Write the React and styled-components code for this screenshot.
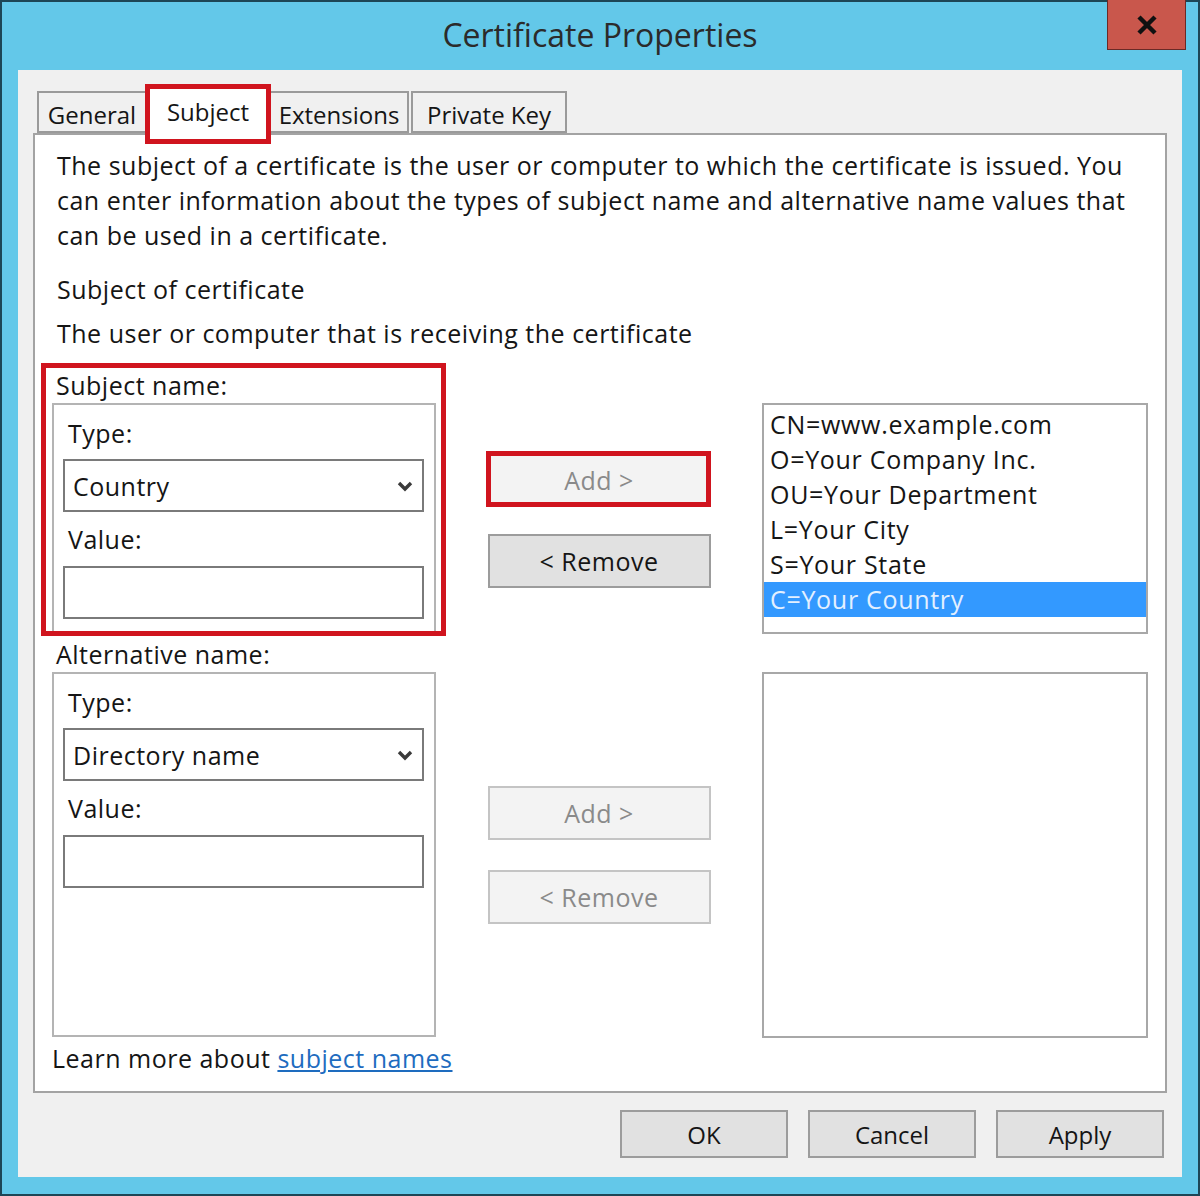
import React from "react";
import styled, { createGlobalStyle } from "styled-components";

const Global = createGlobalStyle`
  html, body { margin: 0; padding: 0; background: #1d4656; }
  body { font-family: "Open Sans", "Noto Sans", sans-serif; }
  * { box-sizing: border-box; }
`;

const Window = styled.div`
  width: 1200px;
  height: 1196px;
  background: #63c8e9;
  border: 2px solid #1d4656;
  display: flex;
  flex-direction: column;
`;

const TitleBar = styled.div`
  height: 70px;
  display: grid;
  grid-template-columns: 1fr auto 1fr;
  align-items: start;
`;

const Title = styled.div`
  grid-column: 2;
  font-size: 32px;
  color: #2b2b2b;
  line-height: 70px;
  margin-top: -2px;
`;

const CloseButton = styled.div`
  grid-column: 3;
  justify-self: end;
  margin-right: 12px;
  margin-top: -2px;
  width: 79px;
  height: 50px;
  background: #c9574c;
  border: 1px solid #6b2a26;
  border-top: none;
  display: flex;
  align-items: center;
  justify-content: center;
`;

const Client = styled.div`
  flex: 1;
  margin: 0 16px 17px;
  background: #f0f0f0;
  padding: 16px 15px 19px;
  display: flex;
  flex-direction: column;
  color: #151515;
  font-size: 25px;
  letter-spacing: 0.5px;
`;

const TabStrip = styled.div`
  display: flex;
  align-items: flex-end;
  padding-left: 4px;
  height: 47px;
`;

const Tab = styled.div`
  position: relative;
  width: ${(p) => p.$w}px;
  margin-right: ${(p) => p.$gap || 0}px;
  height: ${(p) => (p.$active ? 49 : 42)}px;
  margin-bottom: ${(p) => (p.$active ? -2 : 0)}px;
  padding-top: ${(p) => (p.$active ? 0 : 4)}px;
  background: ${(p) => (p.$active ? "#ffffff" : "#f0f0f0")};
  border: 2px solid #9a9a9a;
  border-bottom: ${(p) => (p.$active ? "none" : "2px solid #9a9a9a")};
  z-index: ${(p) => (p.$active ? 2 : 1)};
  display: flex;
  align-items: center;
  justify-content: center;
  font-size: 24px;
  letter-spacing: 0px;
  white-space: nowrap;
`;

const Highlight = styled.span`
  position: absolute;
  left: ${(p) => p.$l}px;
  right: ${(p) => p.$r}px;
  top: ${(p) => p.$t}px;
  bottom: ${(p) => p.$b}px;
  border: 5px solid #d0141e;
  pointer-events: none;
  z-index: 5;
`;

const Panel = styled.div`
  background: #ffffff;
  border: 2px solid #a3a3a3;
  padding: 13px 17px 15px;
  display: flex;
  flex-direction: column;
`;

const Para = styled.p`
  margin: ${(p) => p.$mt || 0}px 0 0 5px;
  line-height: 35px;
  white-space: nowrap;
`;

const Section = styled.div`
  margin-top: ${(p) => p.$mt}px;
  display: grid;
  grid-template-columns: 384px 223px 386px;
  justify-content: space-between;
`;

const LeftCol = styled.div`
  position: relative;
  display: flex;
  flex-direction: column;
`;

const GroupLabel = styled.div`
  line-height: 35px;
  padding-left: 4px;
`;

const GroupBox = styled.div`
  height: ${(p) => p.$h}px;
  border: 2px solid #b4b4b4;
  padding: 11px 10px 0 9px;
  display: flex;
  flex-direction: column;
`;

const FieldLabel = styled.div`
  line-height: 35px;
  padding-left: 5px;
  margin-top: ${(p) => p.$mt || 0}px;
`;

const SelectBox = styled.div`
  height: 53px;
  margin-top: 8px;
  border: 2px solid #7a7a7a;
  background: #ffffff;
  display: flex;
  align-items: center;
  justify-content: space-between;
  padding: 0 8px 0 8px;
`;

const TextInput = styled.div`
  height: 53px;
  margin-top: 9px;
  border: 2px solid #7a7a7a;
  background: #ffffff;
`;

const MidCol = styled.div`
  display: flex;
  flex-direction: column;
  padding-top: ${(p) => p.$pt}px;
`;

const ButtonWrap = styled.div`
  position: relative;
  margin-top: ${(p) => p.$mt || 0}px;
`;

const Button = styled.div`
  height: ${(p) => p.$h || 54}px;
  width: ${(p) => (p.$w ? `${p.$w}px` : "100%")};
  border: 2px solid ${(p) => (p.$disabled ? "#c4c4c4" : "#9c9c9c")};
  background: ${(p) => (p.$disabled ? "#f3f3f3" : "#e1e1e1")};
  color: ${(p) => (p.$disabled ? "#8a8a8a" : "#151515")};
  display: flex;
  align-items: center;
  justify-content: center;
  font-size: ${(p) => p.$fs || 25}px;
  letter-spacing: ${(p) => (p.$fs ? 0 : 0.5)}px;
  white-space: nowrap;
`;

const RightCol = styled.div`
  padding-top: 35px;
`;

const ListBox = styled.div`
  height: ${(p) => p.$h}px;
  border: 2px solid #a8a8a8;
  background: #ffffff;
  padding-top: 2px;
`;

const ListItem = styled.div`
  line-height: 35px;
  height: 35px;
  padding-left: 6px;
  background: ${(p) => (p.$selected ? "#3399ff" : "transparent")};
  color: ${(p) => (p.$selected ? "#e3f0ff" : "#151515")};
  letter-spacing: 0.7px;
  white-space: nowrap;
`;

const LearnMore = styled.div`
  margin-top: 3px;
  line-height: 35px;
`;

const Link = styled.a`
  color: #1e6cbf;
  text-decoration: underline;
`;

const ButtonRow = styled.div`
  margin-top: 17px;
  display: flex;
  justify-content: flex-end;
  gap: 20px;
  padding-right: 3px;
`;

const Chevron = () => (
  <svg width="18" height="12" viewBox="0 0 18 12">
    <polyline
      points="3,3 9,9 15,3"
      fill="none"
      stroke="#3a3a3a"
      strokeWidth="3.4"
    />
  </svg>
);

const CloseX = () => (
  <svg width="22" height="20" viewBox="0 0 22 20">
    <path d="M3 2 L19 18 M19 2 L3 18" stroke="#111" strokeWidth="4.5" strokeLinecap="butt" />
  </svg>
);

const items = [
  "CN=www.example.com",
  "O=Your Company Inc.",
  "OU=Your Department",
  "L=Your City",
  "S=Your State",
  "C=Your Country",
];

export default function App() {
  return (
    <>
      <Global />
      <Window>
        <TitleBar>
          <Title>Certificate Properties</Title>
          <CloseButton>
            <CloseX />
          </CloseButton>
        </TitleBar>
        <Client>
          <TabStrip>
            <Tab $w={110} $gap={1}>General</Tab>
            <Tab $w={120} $gap={1} $active>
              Subject
              <Highlight $l={-5} $r={-5} $t={-4} $b={-9} />
            </Tab>
            <Tab $w={140} $gap={2}>Extensions</Tab>
            <Tab $w={156}>Private Key</Tab>
          </TabStrip>
          <Panel>
            <Para>
              The subject of a certificate is the user or computer to which the certificate is issued. You
              <br />
              can enter information about the types of subject name and alternative name values that
              <br />
              can be used in a certificate.
            </Para>
            <Para $mt={19}>Subject of certificate</Para>
            <Para $mt={9}>The user or computer that is receiving the certificate</Para>

            <Section $mt={17}>
              <LeftCol>
                <Highlight $l={-11} $r={-10} $t={-5} $b={-2} />
                <GroupLabel>Subject name:</GroupLabel>
                <GroupBox $h={230}>
                  <FieldLabel>Type:</FieldLabel>
                  <SelectBox>
                    <span>Country</span>
                    <Chevron />
                  </SelectBox>
                  <FieldLabel $mt={10}>Value:</FieldLabel>
                  <TextInput />
                </GroupBox>
              </LeftCol>
              <MidCol $pt={85}>
                <ButtonWrap>
                  <Button $disabled>Add &gt;</Button>
                  <Highlight $l={-2} $r={0} $t={-2} $b={0} />
                </ButtonWrap>
                <ButtonWrap $mt={27}>
                  <Button>&lt; Remove</Button>
                </ButtonWrap>
              </MidCol>
              <RightCol>
                <ListBox $h={231}>
                  {items.map((t, i) => (
                    <ListItem key={t} $selected={i === items.length - 1}>
                      {t}
                    </ListItem>
                  ))}
                </ListBox>
              </RightCol>
            </Section>

            <Section $mt={3}>
              <LeftCol>
                <GroupLabel>Alternative name:</GroupLabel>
                <GroupBox $h={365}>
                  <FieldLabel>Type:</FieldLabel>
                  <SelectBox>
                    <span>Directory name</span>
                    <Chevron />
                  </SelectBox>
                  <FieldLabel $mt={10}>Value:</FieldLabel>
                  <TextInput />
                </GroupBox>
              </LeftCol>
              <MidCol $pt={149}>
                <ButtonWrap>
                  <Button $disabled>Add &gt;</Button>
                </ButtonWrap>
                <ButtonWrap $mt={30}>
                  <Button $disabled>&lt; Remove</Button>
                </ButtonWrap>
              </MidCol>
              <RightCol>
                <ListBox $h={366} />
              </RightCol>
            </Section>

            <LearnMore>
              Learn more about <Link href="#">subject names</Link>
            </LearnMore>
          </Panel>
          <ButtonRow>
            <Button $w={168} $h={48} $fs={24}>OK</Button>
            <Button $w={168} $h={48} $fs={24}>Cancel</Button>
            <Button $w={168} $h={48} $fs={24}>Apply</Button>
          </ButtonRow>
        </Client>
      </Window>
    </>
  );
}
